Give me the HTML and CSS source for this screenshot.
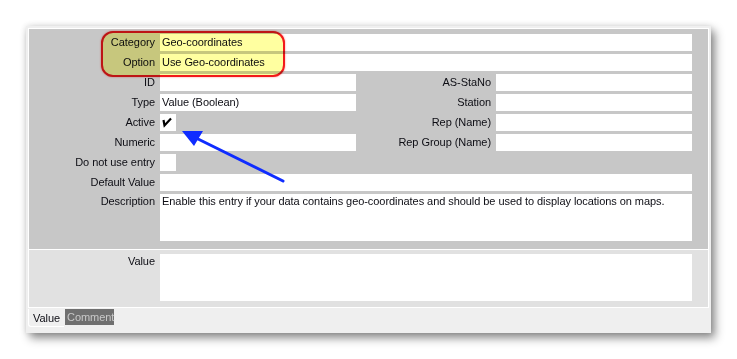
FILE: index.html
```html
<html><head><meta charset="utf-8">
<title>Option Editor</title>
<link rel="stylesheet" href="styles.css">
</head><body>
<div class="window">
  <div class="panes">
    <div class="upper">
      <div class="form">
        <label>Category</label>
        <div class="field wide">Geo-coordinates</div>

        <label>Option</label>
        <div class="field wide">Use Geo-coordinates</div>

        <label>ID</label>
        <div class="field"></div>
        <label>AS-StaNo</label>
        <div class="field"></div>

        <label>Type</label>
        <div class="field">Value (Boolean)</div>
        <label>Station</label>
        <div class="field"></div>

        <label>Active</label>
        <div class="cell"><div class="check">
          <svg width="16" height="17" viewBox="0 0 16 17"><polyline points="3.5,6 4.5,11.5 11,4.5" fill="none" stroke="#000" stroke-width="2.2" stroke-linejoin="miter"/></svg>
        </div></div>
        <label>Rep (Name)</label>
        <div class="field"></div>

        <label>Numeric</label>
        <div class="field"></div>
        <label>Rep Group (Name)</label>
        <div class="field"></div>

        <label>Do not use entry</label>
        <div class="cell"><div class="check"></div></div>
        <div class="blank"></div>

        <label>Default Value</label>
        <div class="field wide"></div>

        <label class="top">Description</label>
        <div class="field wide memo">Enable this entry if your data contains geo-coordinates and should be used to display locations on maps.</div>
      </div>
    </div>
    <div class="lower">
      <div class="form">
        <label class="top">Value</label>
        <div class="field wide memo"></div>
      </div>
    </div>
  </div>
  <div class="tabs">
    <div class="tab active">Value</div>
    <div class="tab">Comment</div>
  </div>

  <div class="highlight"></div>
  <svg class="arrow" width="685" height="307" viewBox="0 0 685 307">
    <line x1="168" y1="111" x2="257" y2="155" stroke="#0f2cff" stroke-width="3" stroke-linecap="round"/>
    <polygon points="156,105 177,105 168,120" fill="#0f2cff"/>
  </svg>
</div>
</body></html>
```
FILE: styles.css
```css
body {
  margin: 0;
  padding: 26px 0 0 26px;
  background-color: #fff;
  font-family: "Liberation Sans", Arial, sans-serif;
  font-size: 11px;
  letter-spacing: -0.06px;
  color: #0d0d14;
}
.window {
  position: relative;
  width: 681px;
  height: 303px;
  padding: 2px;
  background-color: #efefef;
  box-shadow: 4px 5px 9px rgba(0,0,0,0.45), 0 0 6px rgba(0,0,0,0.12);
}
.panes {
  border: 1px solid #fff;
  background-color: #fff;
  display: flex;
  flex-direction: column;
  gap: 1px;
}
.upper {
  background-color: #c7c7c7;
  padding: 5px 11px 8px 0;
}
.lower {
  background-color: #e1e1e1;
  padding: 4px 11px 6px 0;
}
.form {
  display: grid;
  grid-template-columns: 126px 196px 130px 196px;
  column-gap: 5px;
  row-gap: 3px;
  align-items: start;
}
.form label {
  height: 17px;
  text-align: right;
  line-height: 17px;
  white-space: nowrap;
}
.form label.top {
  line-height: 15px;
}
.field {
  height: 17px;
  background-color: #fff;
  line-height: 17px;
  padding-left: 2px;
  white-space: nowrap;
  overflow: hidden;
}
.field.wide {
  grid-column: 2 / 5;
}
.field.memo {
  height: 47px;
  line-height: 15px;
  white-space: normal;
}
.cell {
  display: flex;
  height: 17px;
}
.check {
  width: 16px;
  height: 17px;
  background-color: #fff;
}
.blank {
  grid-column: 3 / 5;
  height: 17px;
}
.tabs {
  display: flex;
  gap: 1px;
  margin-top: 1px;
}
.tab {
  width: 47px;
  height: 16px;
  line-height: 17px;
  padding: 0 0 0 2px;
  color: #c9c9c9;
  background-color: #6f6f6f;
}
.tab.active {
  width: 31px;
  padding: 0 0 0 4px;
  height: 17px;
  color: #0d0d14;
  background-color: #efefef;
  border-left: 1px solid #fff;
  border-bottom: 1px solid #fff;
  border-bottom-left-radius: 3px;
  line-height: 19px;
}
.highlight {
  position: absolute;
  left: 75px;
  top: 5px;
  width: 180px;
  height: 42px;
  border: 2px solid #f21a1a;
  border-radius: 12px;
  background-color: #ffffa0;
  mix-blend-mode: multiply;
  box-shadow: 0 0 2px rgba(255,0,0,0.5);
}
.arrow {
  position: absolute;
  left: 0;
  top: 0;
}
```
